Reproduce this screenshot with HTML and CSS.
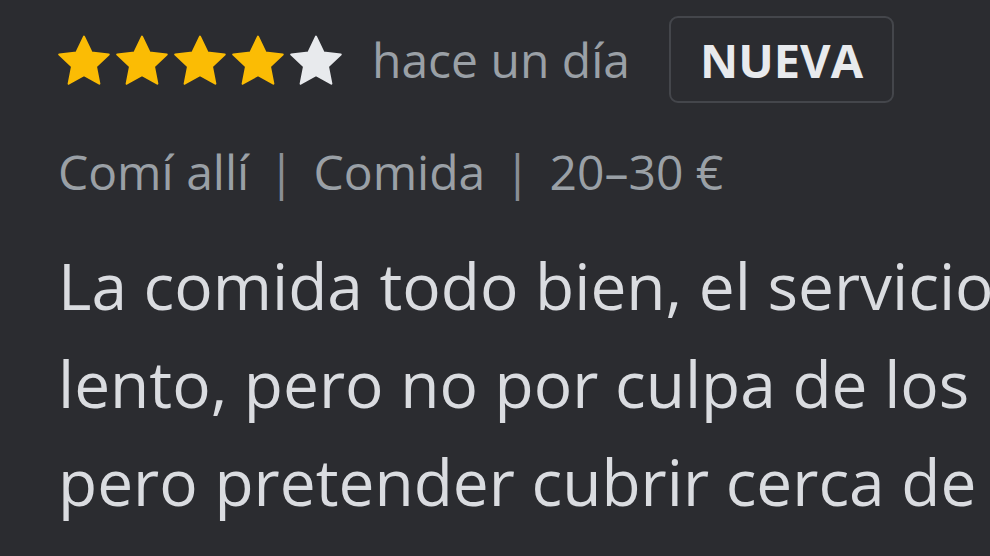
FILE: index.html
```html
<!DOCTYPE html>
<html lang="es">

<head>
    <meta charset="UTF-8">
    <meta name="viewport" content="width=device-width, initial-scale=1.0">
    <title>Reseña</title>
    <link rel="stylesheet" href="styles.css">
</head>

<body>
    <div class="review">
        <div class="top">
            <div class="stars">
                <svg class="star on" viewBox="2 2 20 19"><path d="M12 2.5l2.9 6.1 6.6.8-4.9 4.6 1.3 6.6L12 17.3l-5.9 3.3 1.3-6.6-4.9-4.6 6.6-.8z"/></svg>
                <svg class="star on" viewBox="2 2 20 19"><path d="M12 2.5l2.9 6.1 6.6.8-4.9 4.6 1.3 6.6L12 17.3l-5.9 3.3 1.3-6.6-4.9-4.6 6.6-.8z"/></svg>
                <svg class="star on" viewBox="2 2 20 19"><path d="M12 2.5l2.9 6.1 6.6.8-4.9 4.6 1.3 6.6L12 17.3l-5.9 3.3 1.3-6.6-4.9-4.6 6.6-.8z"/></svg>
                <svg class="star on" viewBox="2 2 20 19"><path d="M12 2.5l2.9 6.1 6.6.8-4.9 4.6 1.3 6.6L12 17.3l-5.9 3.3 1.3-6.6-4.9-4.6 6.6-.8z"/></svg>
                <svg class="star" viewBox="2 2 20 19"><path d="M12 2.5l2.9 6.1 6.6.8-4.9 4.6 1.3 6.6L12 17.3l-5.9 3.3 1.3-6.6-4.9-4.6 6.6-.8z"/></svg>
            </div>
            <span class="date">hace un día</span>
            <span class="badge">NUEVA</span>
        </div>

        <div class="meta">
            <span>Comí allí</span>
            <span class="sep">|</span>
            <span>Comida</span>
            <span class="sep">|</span>
            <span>20–30 €</span>
        </div>

        <p class="text">
            La comida todo bien, el servicio<br>
            lento, pero no por culpa de los<br>
            pero pretender cubrir cerca de
        </p>
    </div>
</body>

</html>
```

FILE: styles.css
```css
* {
    margin: 0;
    padding: 0;
    box-sizing: border-box;
}

body {
    background: #2b2c30;
    font-family: "Open Sans", Roboto, sans-serif;
    overflow: hidden;
}

.review {
    padding: 16px 0 0 58px;
    white-space: nowrap;
}

.top {
    display: flex;
    align-items: center;
}

.stars {
    display: flex;
    gap: 6px;
}

.star {
    width: 52px;
    height: 50px;
    fill: #e8eaed;
    stroke: #e8eaed;
    stroke-width: 0.8;
    stroke-linejoin: round;
}

.star.on {
    fill: #fbbc04;
    stroke: #fbbc04;
}

/* 날짜 글씨 폭을 원본에 맞춤 */
.date {
    margin-left: 30px;
    font-size: 48px;
    color: #9aa0a6;
}

.badge {
    margin-left: 39px;
    height: 87px;
    padding: 0 29px;
    border: 2px solid #44464b;
    border-radius: 9px;
    display: flex;
    align-items: center;
    font-size: 47px;
    font-weight: 700;
    color: #e8eaed;
}

.meta {
    margin-top: 36px;
    display: flex;
    gap: 19px;
    font-size: 48px;
    color: #9aa0a6;
}

.meta .sep {
    color: #8a8e94;
}

.text {
    margin-top: 33px;
    font-size: 64px;
    line-height: 98px;
    color: #dadce0;
}
```
